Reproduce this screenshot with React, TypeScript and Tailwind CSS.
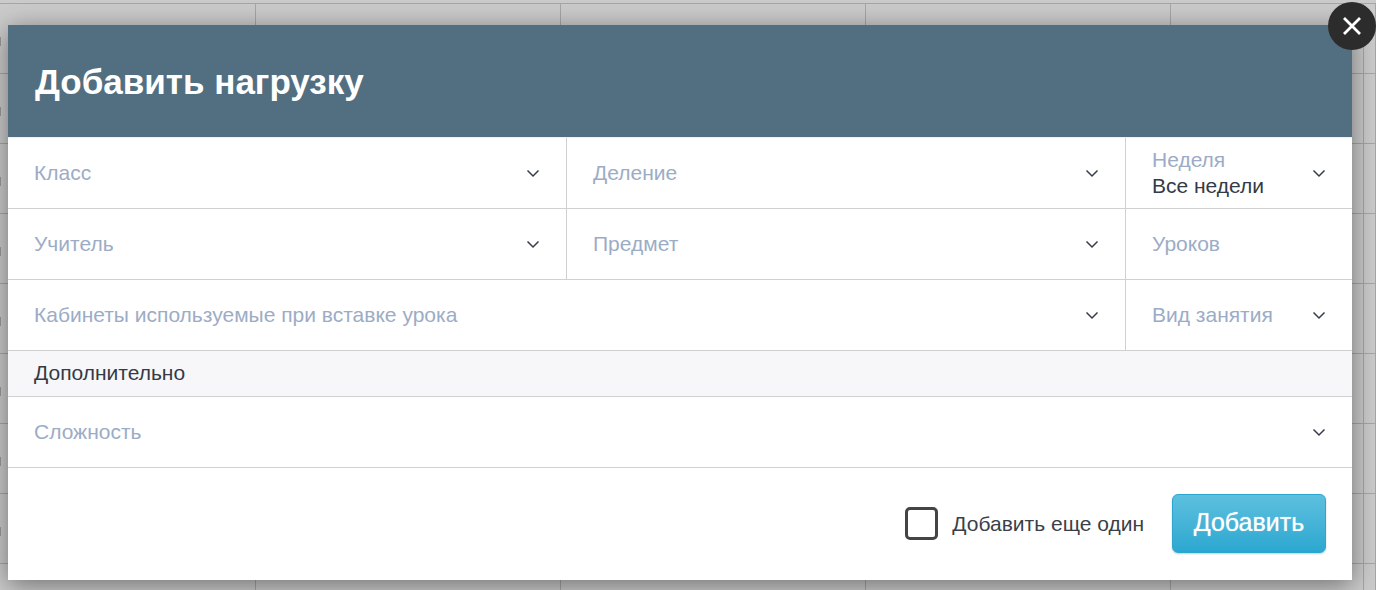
import React from "react";

const Chevron = () => (
  <svg width="14" height="9" viewBox="0 0 14 9" fill="none" className="shrink-0">
    <path d="M1.5 1.5 L7 7 L12.5 1.5" stroke="#363c48" strokeWidth="1.5" />
  </svg>
);

function Field({
  label,
  value,
  chevron = true,
  border = false,
  className = "",
}: {
  label: string;
  value?: string;
  chevron?: boolean;
  border?: boolean;
  className?: string;
}) {
  return (
    <div
      className={`flex h-[70px] items-center justify-between pl-[26px] pr-[26px] ${border ? "border-r border-[#d0d0d0]" : ""} ${className}`}
    >
      <div className="flex flex-col">
        <span className="text-[21px] leading-[26px] text-[#9cacc6]">{label}</span>
        {value && <span className="text-[21px] leading-[26px] text-[#343a46]">{value}</span>}
      </div>
      {chevron && <Chevron />}
    </div>
  );
}

const Line = () => <div className="h-px bg-[#d0d0d0]" />;

export default function App() {
  const cells = Array.from({ length: 9 * 6 });
  return (
    <div className="relative h-[590px] w-[1376px] overflow-hidden bg-[#cbcbcb] font-['Liberation_Sans',sans-serif]">
      <div className="grid grid-cols-[256px_305px_305px_305px_193px_12px] auto-rows-[70px] pt-[3px]">
        {cells.map((_, i) => (
          <div key={i} className="border-t border-r border-[#a6a6a6] pt-[33px]">
            {i % 6 === 0 && <div className="h-[9px] w-[1px] bg-[#9a9a9a]" />}
          </div>
        ))}
      </div>

      <div className="absolute left-[8px] top-[25px] flex h-[555px] w-[1344px] flex-col bg-white shadow-[0_5px_25px_rgba(0,0,0,0.45)]">
        <div className="flex h-[112px] items-center bg-[#526f81] pl-[27px]">
          <h1 className="text-[35px] font-bold leading-none text-white">Добавить нагрузку</h1>
        </div>
        <div className="h-px bg-[#eef1f3]" />
        <div className="grid grid-cols-[559px_559px_226px]">
          <Field label="Класс" border />
          <Field label="Деление" border />
          <Field label="Неделя" value="Все недели" />
        </div>
        <Line />
        <div className="grid grid-cols-[559px_559px_226px]">
          <Field label="Учитель" border />
          <Field label="Предмет" border />
          <Field label="Уроков" chevron={false} />
        </div>
        <Line />
        <div className="grid grid-cols-[1118px_226px]">
          <Field label="Кабинеты используемые при вставке урока" border />
          <Field label="Вид занятия" />
        </div>
        <Line />
        <div className="flex h-[45px] items-center bg-[#f7f7f9] pb-[2px] pl-[26px] text-[21px] text-[#343a46]">
          Дополнительно
        </div>
        <Line />
        <Field label="Сложность" />
        <Line />
        <div className="flex flex-1 items-center justify-end pb-[2px] pr-[26px]">
          <div className="h-[33px] w-[33px] rounded-[5px] border-[3px] border-[#444444] bg-white" />
          <span className="ml-[14px] mt-[2px] text-[21px] text-[#3a3f4a]">Добавить еще один</span>
          <button className="ml-[28px] h-[59px] w-[154px] rounded-[6px] border border-[#2aa6cf] bg-gradient-to-b from-[#5cc0df] to-[#2aa7d0] text-[25px] text-white shadow-[0_1px_2px_rgba(0,0,0,0.2)] [text-shadow:0_0_1px_rgba(255,255,255,0.7)]">
            Добавить
          </button>
        </div>
      </div>

      <div className="absolute left-[1328px] top-[2px] flex h-[48px] w-[48px] items-center justify-center rounded-full bg-[#2c2c2c]">
        <svg width="20" height="20" viewBox="0 0 20 20" fill="none">
          <path d="M2 2 L18 18 M18 2 L2 18" stroke="#ffffff" strokeWidth="2.8" />
        </svg>
      </div>
    </div>
  );
}
